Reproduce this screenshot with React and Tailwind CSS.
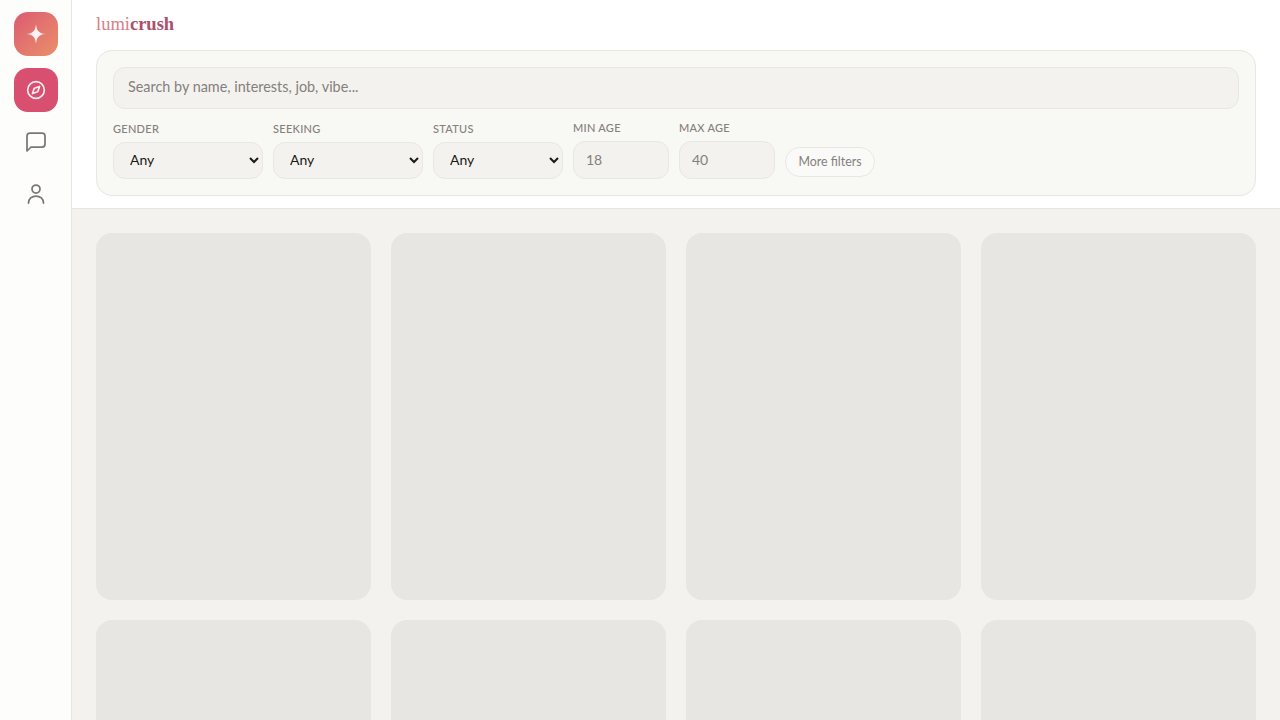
import { Compass } from 'lucide-react'

const selects = [
  { label: 'Gender', width: 'w-[150px]' },
  { label: 'Seeking', width: 'w-[150px]' },
  { label: 'Status', width: 'w-[130px]' },
]

function Sparkle() {
  return (
    <svg viewBox="0 0 24 24" className="h-6 w-6 fill-white/90">
      <path d="M12 2c.5 6.800 3 9.400 9.500 10-6.500.6-9 3.200-9.500 10-.5-6.800-3-9.400-9.500-10 6.500-.6 9-3.200 9.500-10z" />
    </svg>
  )
}

function ChatIcon() {
  return (
    <svg viewBox="0 0 24 24" className="h-6 w-6 fill-none stroke-current stroke-[1.75]">
      <path strokeLinejoin="round" d="M21 14a3 3 0 0 1-3 3H7l-4 4V6a3 3 0 0 1 3-3h12a3 3 0 0 1 3 3z" />
    </svg>
  )
}

function PersonIcon() {
  return (
    <svg viewBox="0 0 24 24" className="h-6 w-6 fill-none stroke-current stroke-[1.75]">
      <circle cx="12" cy="7" r="4" />
      <path strokeLinecap="round" d="M4.500 21c0-4.200 3.300-7 7.500-7s7.500 2.800 7.500 7" />
    </svg>
  )
}

export default function App() {
  return (
    <div className="flex h-screen overflow-hidden bg-[#f3f2ef] font-['Lato','Open_Sans',sans-serif] text-[#1c1917]">
      <aside className="flex w-[72px] shrink-0 flex-col items-center border-r border-[#e7e5e0] bg-[#fdfdfc] pt-3">
        <div className="mb-3 flex h-11 w-11 items-center justify-center rounded-[14px] bg-gradient-to-br from-[#dc5a72] to-[#e98f68]">
          <Sparkle />
        </div>
        <div className="flex flex-col gap-2">
          <button className="flex h-11 w-11 items-center justify-center rounded-[14px] bg-[#d84f6f] text-white/90">
            <Compass size={20} strokeWidth={2} />
          </button>
          <button className="flex h-11 w-11 items-center justify-center rounded-[14px] text-[#7c7772]">
            <ChatIcon />
          </button>
          <button className="flex h-11 w-11 items-center justify-center rounded-[14px] text-[#7c7772]">
            <PersonIcon />
          </button>
        </div>
      </aside>

      <main className="flex min-w-0 flex-1 flex-col">
        <header className="border-b border-[#e7e5e0] bg-white px-6 pb-3 pt-3">
          <div className="mb-[13px] h-[25px] font-['Liberation_Serif',serif] text-[18.5px] leading-[25px]">
            <span className="text-[#d5808c]">lumi</span>
            <span className="font-bold text-[#ab4f6b]">crush</span>
          </div>
          <div className="rounded-2xl border border-[#e9e7e2] bg-[#f8f8f5] p-4">
            <input
              placeholder="Search by name, interests, job, vibe..."
              className="h-[42px] w-full rounded-xl border border-[#e9e7e2] bg-[#f3f2ef] px-[14px] pb-[3px] text-[14.4px] outline-none placeholder:text-[#85807b]"
            />
            <div className="mt-3 flex items-end gap-2.5">
              {selects.map((item) => (
                <label key={item.label} className={`flex flex-col ${item.width}`}>
                  <span className="mb-[6px] text-[11px] font-medium uppercase leading-[14px] tracking-wide text-[#85807b]">
                    {item.label}
                  </span>
                  <select className="h-[37px] w-full rounded-xl border border-[#e9e7e2] bg-[#f3f2ef] px-3 pb-[2px] text-sm outline-none">
                    <option>Any</option>
                  </select>
                </label>
              ))}
              <label className="flex w-24 flex-col">
                <span className="mb-[6px] text-[11px] font-medium uppercase leading-[14px] tracking-wide text-[#85807b]">
                  Min age
                </span>
                <input
                  placeholder="18"
                  className="h-[38px] w-full rounded-xl border border-[#e9e7e2] bg-[#f3f2ef] px-3 pb-[2px] text-sm outline-none placeholder:text-[#85807b]"
                />
              </label>
              <label className="flex w-24 flex-col">
                <span className="mb-[6px] text-[11px] font-medium uppercase leading-[14px] tracking-wide text-[#85807b]">
                  Max age
                </span>
                <input
                  placeholder="40"
                  className="h-[38px] w-full rounded-xl border border-[#e9e7e2] bg-[#f3f2ef] px-3 pb-[2px] text-sm outline-none placeholder:text-[#85807b]"
                />
              </label>
              <button className="mb-[2px] h-[30px] w-[90px] rounded-full border border-[#e9e7e2] bg-[#fafaf8] text-[12.4px] text-[#85807b]">
                More filters
              </button>
            </div>
          </div>
        </header>

        <section className="grid flex-1 grid-cols-4 gap-5 overflow-hidden px-6 pt-6">
          {Array.from({ length: 8 }).map((_, i) => (
            <div key={i} className="h-[367px] rounded-2xl bg-[#e7e6e2]" />
          ))}
        </section>
      </main>
    </div>
  )
}
